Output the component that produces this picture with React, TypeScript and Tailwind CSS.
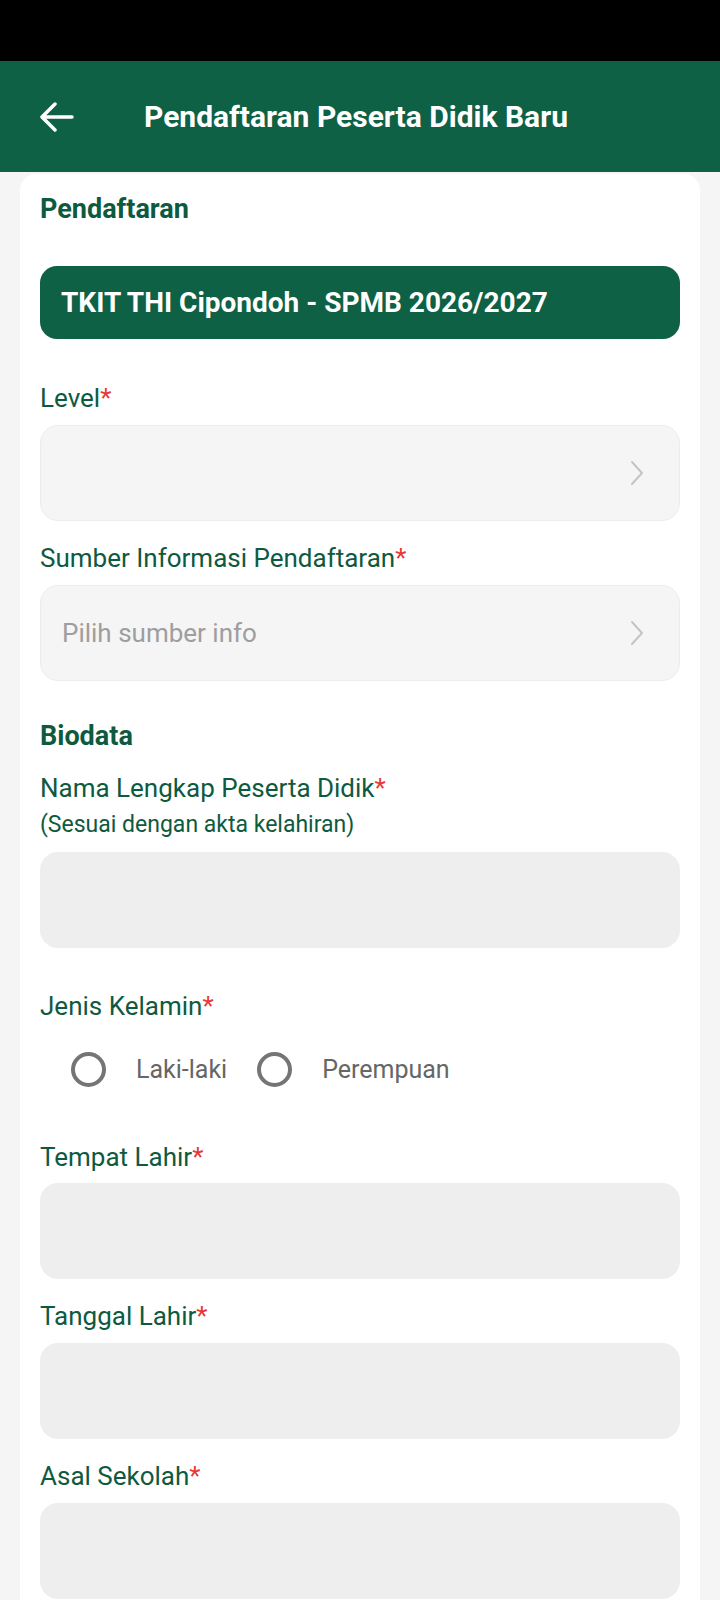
import React from 'react';

const Label = ({ text, sub }: { text: string; sub?: string }) => (
  <div className="text-[#0e5a3f]">
    <div className="text-[26px] leading-[32px]">
      {text}
      <span className="text-[#e53935]">*</span>
    </div>
    {sub && <div className="text-[23px] leading-[30px] mt-[6px]">{sub}</div>}
  </div>
);

const Chevron = () => (
  <svg width="16" height="28" viewBox="0 0 16 28" fill="none">
    <path d="M3 3l10 11L3 25" stroke="#c4c4c4" strokeWidth="2" strokeLinecap="round" strokeLinejoin="round" />
  </svg>
);

const Select = ({ placeholder }: { placeholder?: string }) => (
  <div className="h-[96px] rounded-[18px] bg-[#f5f5f5] border border-[#ececec] flex items-center justify-between pl-[21px] pr-[34px]">
    <span className="text-[26px] text-[#9e9e9e]">{placeholder}</span>
    <Chevron />
  </div>
);

const Input = () => <div className="h-[96px] rounded-[18px] bg-[#eeeeee]" />;

const Radio = ({ text }: { text: string }) => (
  <div className="flex items-center">
    <div className="w-[35px] h-[35px] rounded-full border-[4px] border-[#757575]" />
    <span className="ml-[30px] text-[25px] text-[#666666]">{text}</span>
  </div>
);

export default function App() {
  return (
    <div className="w-[720px] h-[1600px] overflow-hidden bg-[#f5f5f5]" style={{ fontFamily: 'Roboto, "Noto Sans", sans-serif' }}>
      <div className="h-[61px] bg-black" />
      <div className="h-[111px] bg-[#0e6145] flex items-center px-[40px]">
        <svg width="34" height="30" viewBox="0 0 34 30" fill="none">
          <path d="M32 15H3M15 2L2 15l13 13" stroke="#fff" strokeWidth="3.5" strokeLinecap="round" strokeLinejoin="round" />
        </svg>
        <h1 className="ml-[70px] text-white text-[30px] font-bold">Pendaftaran Peserta Didik Baru</h1>
      </div>
      <div className="mx-[20px] mt-[2px] bg-white rounded-t-[16px] px-[20px] pt-[20px] pb-[40px]">
        <div className="text-[27px] font-bold text-[#0e5a3f] leading-[30px]">Pendaftaran</div>
        <div className="mt-[42px] h-[73px] rounded-[17px] bg-[#0e6145] flex items-center px-[21px]">
          <span className="text-white text-[28px] font-bold">TKIT THI Cipondoh - SPMB 2026/2027</span>
        </div>
        <div className="mt-[43px]">
          <Label text="Level" />
        </div>
        <div className="mt-[11px]">
          <Select />
        </div>
        <div className="mt-[21px]">
          <Label text="Sumber Informasi Pendaftaran" />
        </div>
        <div className="mt-[11px]">
          <Select placeholder="Pilih sumber info" />
        </div>
        <div className="mt-[40px] text-[27px] font-bold text-[#0e5a3f] leading-[30px]">Biodata</div>
        <div className="mt-[21px]">
          <Label text="Nama Lengkap Peserta Didik" sub="(Sesuai dengan akta kelahiran)" />
        </div>
        <div className="mt-[12px]">
          <Input />
        </div>
        <div className="mt-[42px]">
          <Label text="Jenis Kelamin" />
        </div>
        <div className="mt-[29px] flex items-center gap-[30px] pl-[31px]">
          <Radio text="Laki-laki" />
          <Radio text="Perempuan" />
        </div>
        <div className="mt-[52px]">
          <Label text="Tempat Lahir" />
        </div>
        <div className="mt-[10px]">
          <Input />
        </div>
        <div className="mt-[21px]">
          <Label text="Tanggal Lahir" />
        </div>
        <div className="mt-[11px]">
          <Input />
        </div>
        <div className="mt-[21px]">
          <Label text="Asal Sekolah" />
        </div>
        <div className="mt-[11px]">
          <Input />
        </div>
      </div>
    </div>
  );
}
